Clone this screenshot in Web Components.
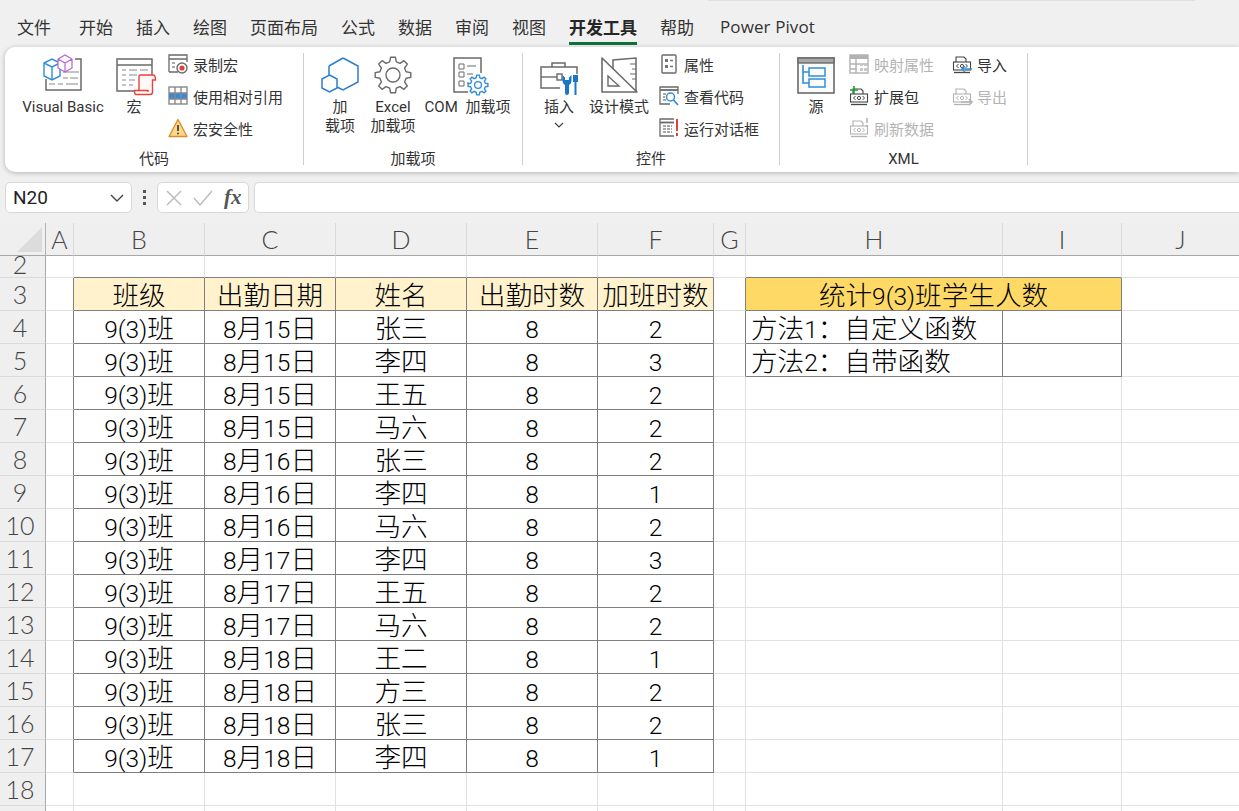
<!DOCTYPE html>
<html lang="zh">
<head>
<meta charset="utf-8">
<title>开发工具</title>
<style>
html, body { margin: 0; height: 100%; overflow: hidden; background: #f0f0f0; }
body { font-family: "Noto Sans CJK SC", sans-serif; color: #333; }
</style>
</head>
<body>
<excel-tabs></excel-tabs>
<excel-ribbon>
  <ribbon-group label="代码" style="width:299px;--pad:11px">
    <big-button icon="vb" style="width:94px">Visual Basic</big-button>
    <big-button icon="macro" style="width:48px">宏</big-button>
    <small-column style="margin-left:10px">
      <small-button icon="record">录制宏</small-button>
      <small-button icon="relative">使用相对引用</small-button>
      <small-button icon="warn">宏安全性</small-button>
    </small-column>
  </ribbon-group>
  <ribbon-group label="加载项" style="width:219px;--pad:14px">
    <big-button icon="addin" style="width:44px">加<br>载项</big-button>
    <big-button icon="gear" style="width:62px">Excel<br>加载项</big-button>
    <big-button icon="com" style="width:87px;word-spacing:4px">COM 加载项</big-button>
  </ribbon-group>
  <ribbon-group label="控件" style="width:257px;--pad:14px">
    <big-button icon="toolbox" chevron style="width:44px">插入</big-button>
    <big-button icon="ruler" style="width:76px">设计模式</big-button>
    <small-column style="margin-left:2px">
      <small-button icon="props">属性</small-button>
      <small-button icon="viewcode">查看代码</small-button>
      <small-button icon="dialog">运行对话框</small-button>
    </small-column>
  </ribbon-group>
  <ribbon-group label="XML" style="width:248px;--pad:16px">
    <big-button icon="source" style="width:40px">源</big-button>
    <small-column style="margin-left:13px;width:103px">
      <small-button icon="map" disabled>映射属性</small-button>
      <small-button icon="pack">扩展包</small-button>
      <small-button icon="refresh" disabled>刷新数据</small-button>
    </small-column>
    <small-column>
      <small-button icon="import">导入</small-button>
      <small-button icon="export" disabled>导出</small-button>
    </small-column>
  </ribbon-group>
</excel-ribbon>
<formula-bar></formula-bar>
<sheet-grid></sheet-grid>

<script>
// builds a cog outline, used by the two gear icons
const gearPath = (cx, cy, R, r, n) => {
    let d = '';
    for (let i = 0; i < n; i++) {
        const a = i * 2 * Math.PI / n, w = Math.PI / n;
        [[r, a - w * 0.62], [R, a - w * 0.34], [R, a + w * 0.34], [r, a + w * 0.62]].forEach(([q, t], k) => {
            d += (i === 0 && k === 0 ? 'M' : 'L') + (cx + q * Math.sin(t)).toFixed(1) + ' ' + (cy - q * Math.cos(t)).toFixed(1);
        });
    }
    return d + 'Z';
};

const G = '#6a6a6a', B = '#2f8ed8', L = '#b2b2b2';
const svg = (w, h, body) => `<svg width="${w}" height="${h}" viewBox="0 0 ${w} ${h}" fill="none" stroke-width="1.4" style="overflow:visible;display:block">${body}</svg>`;
const docIcon = (extra, c) => svg(20, 20, `<path d="M4 8V3H12L14 5V8" stroke="${c}" stroke-width="1.1"/><rect x="1.5" y="8" width="17" height="8" fill="#fff" stroke="${c}" stroke-width="1.1"/><path d="M2 18.5H18" stroke="${c}" stroke-width="1.3"/><path d="M6.5 10L4.5 12L6.5 14M13.5 10L15.5 12L13.5 14" stroke="${c}" stroke-width="1"/><circle cx="10" cy="12" r="1.6" stroke="${c}" stroke-width="1"/>${extra}`);

const ICONS = {
    vb: svg(40, 38, `<path d="M32 5H38V36H3V25" stroke="${G}" stroke-width="1.5"/>
        <path d="M20 18H36M20 24H25M27 24H35M6 30H12M15 30H20M23 30H35" stroke="#8a8a8a" stroke-width="1.2"/>
        <path d="M1 9L9 5L17 9V22L9 26L1 22ZM1 9L9 13L17 9M9 13V26" stroke="${B}" fill="#fff" stroke-width="1.4"/>
        <path d="M15 5L22 1L29 5V14L22 18L15 14ZM15 5L22 9L29 5M22 9V18" stroke="#bb62d2" fill="#fff" stroke-width="1.2"/>`),
    macro: svg(42, 42, `<path d="M22 37H4V5H39V21" stroke="${G}" stroke-width="1.5"/><path d="M4 11H39" stroke="${G}" stroke-width="1.3"/>
        <path d="M9 16H13M16 16H24M27 16H35M9 21H13M16 21H24M9 26H13M16 26H22M9 31H13M16 31H20" stroke="#8a8a8a" stroke-width="1.2"/>
        <path d="M26 36V22.5Q26 21 28 21H40Q42.5 21 42.5 26H39.5V38Q39.5 40.5 37 40.5H23Q21.5 40.5 21.5 36.5H35V38" fill="#fff8f7" stroke="#e8413c" stroke-width="1.4"/>`),
    record: svg(20, 20, `<path d="M1 18V1H19V8" stroke="${G}" stroke-width="1.3"/><path d="M1 18H10M1 5H19" stroke="${G}" stroke-width="1.3"/><path d="M4 9H7M4 13H7" stroke="#8a8a8a"/><circle cx="14" cy="14" r="5" fill="#fff" stroke="${G}"/><circle cx="14" cy="14" r="2.6" fill="#e0403a"/>`),
    relative: svg(20, 20, `<rect x="1" y="1" width="18" height="17" fill="#fff" stroke="#888"/><rect x="1" y="7" width="18" height="6" fill="#3c8ad6"/><path d="M7 1V18M13 1V18M1 7H19M1 13H19" stroke="#888"/>`),
    warn: svg(20, 20, `<path d="M10 1.5L19 18.5H1Z" fill="#fbd98b" stroke="#dd8a28" stroke-width="1.3" stroke-linejoin="round"/><path d="M10 7V13" stroke="#444" stroke-width="1.8"/><circle cx="10" cy="15.5" r="1" fill="#444"/>`),
    addin: svg(38, 38, `<path d="M22 4L37 12V28L22 36L16 33M8 21V12Z" stroke="#2b7fd0" stroke-width="1.5"/><path d="M8 12L22 4" stroke="#2b7fd0" stroke-width="1.5"/><path d="M8.5 21L16 25V34L8.5 38L1 34V25Z" fill="#fff" stroke="#2b7fd0" stroke-width="1.5"/>`),
    gear: svg(38, 38, `<path d="${gearPath(19, 21, 18, 13.5, 8)}" stroke="${G}" stroke-width="1.4" stroke-linejoin="round"/><circle cx="19" cy="21" r="7" stroke="${G}" stroke-width="1.4"/>`),
    com: svg(38, 40, `<path d="M32 19V4H5V38H19" stroke="${G}" stroke-width="1.5"/>
        <path d="M10 10h5v5h-5zM10 18h5v5h-5zM10 27h5v5h-5z" stroke="${G}" stroke-width="1"/><path d="M18 12H27M18 20H24M18 29H20" stroke="${G}" stroke-width="1.2"/>
        <path d="${gearPath(29, 31, 10, 7.5, 8)}" fill="#fff" stroke="${B}" stroke-width="1.4"/><circle cx="29" cy="31" r="3.4" stroke="${B}" stroke-width="1.3"/>`),
    toolbox: svg(38, 38, `<path d="M12 13V9H25V13" stroke="${G}" stroke-width="1.5"/><path d="M20 34H1V13H37V20" stroke="${G}" stroke-width="1.5"/><path d="M1 23H17" stroke="${G}" stroke-width="1.4"/><rect x="17" y="20" width="5" height="6" stroke="${G}"/>
        <path d="M22.5 21V26Q22.5 30 25 31V39Q25 41 27 41Q29 41 29 39V31Q31.5 30 31.5 26V21L29 23.5V26H25V23.5Z" fill="#1b76c8"/><path d="M33 21H38V28H36.5V41H34.5V28H33Z" fill="#1b76c8"/>`),
    ruler: svg(38, 38, `<path d="M2 4V38H37Z" stroke="${G}" stroke-width="1.6" stroke-linejoin="round"/><path d="M8 22V32H19Z" stroke="${G}" stroke-width="1.4"/><path d="M13 15V6L36 4V38" stroke="${G}" stroke-width="1.5"/><path d="M30 10H36M32 15H36M30 20H36M32 25H36" stroke="${G}" stroke-width="1.2"/>`),
    props: svg(20, 20, `<rect x="3" y="1" width="14" height="18" rx="1" fill="#fff" stroke="${G}"/><path d="M6 5h3v3h-3zM6 11h3v3h-3z" fill="#777"/><path d="M11 6.5H14M11 12.5H14" stroke="#777"/>`),
    viewcode: svg(20, 20, `<path d="M11 18H1V1H19V8" stroke="${G}" stroke-width="1.3"/><path d="M1 4H19" stroke="${G}" stroke-width="1.8"/><path d="M4 8H7M4 11H6M4 14H7" stroke="#8a8a8a"/><circle cx="11.5" cy="11" r="4" fill="#fff" stroke="${B}" stroke-width="1.5"/><path d="M14.5 14L19 19" stroke="${B}" stroke-width="1.8"/>`),
    dialog: svg(20, 20, `<path d="M15 18H1V1H15" stroke="${G}" stroke-width="1.3"/><path d="M1 4.5H15" stroke="${G}" stroke-width="1.8"/><path d="M4 8H13M4 11H13M4 14H13" stroke="#8a8a8a" stroke-dasharray="3 1"/><path d="M18 1V13" stroke="#e0403a" stroke-width="2"/><path d="M18 15V18" stroke="#e0403a" stroke-width="2"/>`),
    source: svg(38, 40, `<rect x="1" y="4" width="36" height="35" fill="#fbfbfb" stroke="${G}" stroke-width="1.6"/><rect x="1" y="4" width="36" height="5" fill="#a8a8a8" stroke="${G}"/><path d="M6 11V29H12M6 18H12" stroke="${B}" stroke-width="1.6"/><rect x="12" y="14" width="16" height="8" stroke="${B}" stroke-width="1.5"/><rect x="12" y="25" width="16" height="8" stroke="${B}" stroke-width="1.5"/>`),
    map: svg(20, 20, `<rect x="1" y="1" width="18" height="18" stroke="${L}"/><rect x="1" y="1" width="18" height="4" fill="${L}"/><path d="M1 10H19M7 5V19M1 15H8" stroke="${L}"/><path d="M11 9h3v3h-3zM15 9h3v3h-3zM11 14h3v3h-3zM15 14h3v3h-3z" fill="#c8c8c8"/>`),
    pack: docIcon(`<path d="M5 0V8M1 4H9" stroke="#1f9a3c" stroke-width="1.6"/>`, '#444'),
    refresh: docIcon(`<path d="M18 0V5M18 7V9" stroke="${L}" stroke-width="1.6"/>`, L),
    import: docIcon(`<path d="M20 15H10M13 12L10 15L13 18" stroke="${B}" stroke-width="1.5" fill="#fff"/>`, '#444'),
    export: docIcon(`<path d="M9 16H20M17 13L20 16L17 19" stroke="${L}" stroke-width="1.5"/>`, L)
};

class ExcelTabs extends HTMLElement {
    constructor() {
        super();
        const tabs = ['文件', '开始', '插入', '绘图', '页面布局', '公式', '数据', '审阅', '视图', '开发工具', '帮助'];
        this.attachShadow({ mode: 'open' }).innerHTML = `
            <style>
                :host { display: flex; position: relative; height: 47px; box-sizing: border-box; padding-left: 17px; gap: 23px; font-size: 17px; color: #333; }
                :host::before { content: ""; position: absolute; left: 708px; top: 0; width: 487px; height: 1px; background: #e0e0e0; }
                span { display: block; height: 42px; line-height: 20px; padding-top: 17px; box-sizing: border-box; white-space: nowrap; }
                style + span { margin-right: 5px; }
                .on { font-weight: 700; color: #262626; height: 45px; border-bottom: 3px solid #0f703b; }
                .pp { margin-left: 3px; font-family: "Open Sans", sans-serif; font-size: 17px; letter-spacing: .1px; }
            </style>
            ${tabs.map(t => `<span class="${t === '开发工具' ? 'on' : ''}">${t}</span>`).join('')}
            <span class="pp">Power Pivot</span>`;
    }
}

class ExcelRibbon extends HTMLElement {
    constructor() {
        super();
        this.attachShadow({ mode: 'open' }).innerHTML = `
            <style>
                :host { display: flex; height: 125px; margin-left: 5px; background: #fff; border-radius: 10px 0 0 10px; box-shadow: 0 1px 5px rgba(0,0,0,.25); font: 15px Roboto, "Noto Sans CJK SC", sans-serif; color: #333; }
            </style>
            <slot></slot>`;
    }
}

class RibbonGroup extends HTMLElement {
    constructor() {
        super();
        this.attachShadow({ mode: 'open' }).innerHTML = `
            <style>
                :host { display: flex; box-sizing: border-box; flex: none; }
                .body { flex: 1; display: flex; flex-direction: column; min-width: 0; }
                .items { flex: 1; display: flex; padding-left: var(--pad); }
                .label { text-align: center; line-height: 20px; padding-bottom: 3px; color: #333; }
                .sep { width: 1px; margin: 6px 0 7px; background: #cfcfcf; }
            </style>
            <div class="body"><div class="items"><slot></slot></div><div class="label"></div></div>
            <div class="sep"></div>`;
        this.shadowRoot.querySelector('.label').textContent = this.getAttribute('label');
    }
}

class BigButton extends HTMLElement {
    constructor() {
        super();
        this.attachShadow({ mode: 'open' }).innerHTML = `
            <style>
                :host { display: flex; flex-direction: column; align-items: center; flex: none; padding-top: 7px; text-align: center; line-height: 19px; white-space: nowrap; }
                .icon { height: 44px; }
                .chev { margin-top: 5px; }
            </style>
            <div class="icon">${ICONS[this.getAttribute('icon')]}</div>
            <div><slot></slot></div>
            ${this.hasAttribute('chevron') ? '<svg class="chev" width="10" height="6" viewBox="0 0 10 6" fill="none" stroke="#444" stroke-width="1.2"><path d="M1 1L5 5L9 1"/></svg>' : ''}`;
    }
}

class SmallColumn extends HTMLElement {
    constructor() {
        super();
        this.attachShadow({ mode: 'open' }).innerHTML = `
            <style>:host { display: flex; flex-direction: column; padding-top: 1px; flex: none; }</style>
            <slot></slot>`;
    }
}

class SmallButton extends HTMLElement {
    constructor() {
        super();
        this.attachShadow({ mode: 'open' }).innerHTML = `
            <style>
                :host { display: flex; align-items: center; gap: 5px; height: 32px; white-space: nowrap; }
                :host([disabled]) { color: #b4b4b4; }
            </style>
            ${ICONS[this.getAttribute('icon')]}<span><slot></slot></span>`;
    }
}

class FormulaBar extends HTMLElement {
    constructor() {
        super();
        this.attachShadow({ mode: 'open' }).innerHTML = `
            <style>
                :host { display: flex; align-items: center; height: 51px; box-sizing: border-box; padding: 10px 0 10px 5px; }
                .box { height: 31px; box-sizing: border-box; background: #fff; border: 1px solid #d8d8d8; border-radius: 5px; display: flex; align-items: center; }
                .name { width: 127px; padding: 0 7px 0 7px; justify-content: space-between; font: 19px Roboto, sans-serif; color: #222; }
                .dots { width: 25px; display: flex; flex-direction: column; align-items: center; gap: 3px; }
                .dots i { width: 3px; height: 3px; background: #555; }
                .fx { width: 92px; padding-left: 8px; gap: 11px; }
                .fx b { font: italic 700 21px "Liberation Serif", serif; color: #555; }
                .input { flex: 1; margin-left: 5px; border-radius: 5px 0 0 5px; border-right: 0; }
            </style>
            <div class="box name"><span>N20</span><svg width="14" height="8" viewBox="0 0 14 8" fill="none" stroke="#444" stroke-width="1.4"><path d="M1 1L7 7L13 1"/></svg></div>
            <div class="dots"><i></i><i></i><i></i></div>
            <div class="box fx">
                <svg width="16" height="16" viewBox="0 0 16 16" fill="none" stroke="#bdbdbd" stroke-width="1.5"><path d="M1 1L15 15M15 1L1 15"/></svg>
                <svg width="20" height="16" viewBox="0 0 20 16" fill="none" stroke="#bdbdbd" stroke-width="1.5"><path d="M1 8L7 15L19 1"/></svg>
                <b>fx</b>
            </div>
            <div class="box input"></div>`;
    }
}

const COLS = ['A', 'B', 'C', 'D', 'E', 'F', 'G', 'H', 'I', 'J'];
const ROSTER = [
    ['8月15日', '张三', 2], ['8月15日', '李四', 3], ['8月15日', '王五', 2], ['8月15日', '马六', 2],
    ['8月16日', '张三', 2], ['8月16日', '李四', 1], ['8月16日', '马六', 2],
    ['8月17日', '李四', 3], ['8月17日', '王五', 2], ['8月17日', '马六', 2],
    ['8月18日', '王二', 1], ['8月18日', '方三', 2], ['8月18日', '张三', 2], ['8月18日', '李四', 1]
];

class SheetGrid extends HTMLElement {
    constructor() {
        super();
        this.values = { 3: { B: '班级', C: '出勤日期', D: '姓名', E: '出勤时数', F: '加班时数', H: '统计9(3)班学生人数' },
            4: { H: '方法1：自定义函数' }, 5: { H: '方法2：自带函数' } };
        ROSTER.forEach(([date, name, extra], i) => {
            this.values[i + 4] = Object.assign(this.values[i + 4] || {}, { B: '9(3)班', C: date, D: name, E: 8, F: extra });
        });
        this.attachShadow({ mode: 'open' });
        this.render();
    }

    inTable(c, r) { // c is an index into COLS
        return (c >= 1 && c <= 5 && r >= 3 && r <= 17) || (c >= 7 && c <= 8 && r >= 3 && r <= 5);
    }

    // digits are set smaller than the han glyphs, the two fonts do not share a scale
    text(v) {
        return String(v).replace(/[0-9()]+/g, m => `<span class="n">${m}</span>`);
    }

    cell(c, r) {
        const col = COLS[c];
        if (r === 3 && col === 'I') return '';
        const v = (this.values[r] || {})[col];
        const span = r === 3 && col === 'H';
        const last = span ? 8 : c;
        const classes = ['c'];
        if (this.inTable(c, r) || this.inTable(last + 1, r)) classes.push('dr');
        if (this.inTable(c, r) || this.inTable(c, r + 1)) classes.push('db');
        if (r === 3 && c <= 5 && c >= 1) classes.push('head');
        if (span) classes.push('title');
        if (col === 'H' && r > 3) classes.push('left');
        return `<div class="${classes.join(' ')}"${span ? ' style="grid-column:span 2"' : ''}>${v === undefined ? '' : `<span>${this.text(v)}</span>`}</div>`;
    }

    render() {
        let cells = `<div class="corner"><svg width="26" height="26" viewBox="0 0 26 26"><path d="M25 0V25H0Z" fill="#dcdcdc"/></svg></div>`;
        cells += COLS.map(c => `<div class="ch">${c}</div>`).join('');
        for (let r = 2; r <= 19; r++) {
            cells += `<div class="rh${r === 2 ? ' clip' : ''}"><span>${r === 19 ? '' : r}</span></div>`;
            COLS.forEach((_, c) => { cells += this.cell(c, r); });
        }
        this.shadowRoot.innerHTML = `
            <style>
                :host { display: block; height: 588px; overflow: hidden; background: #fff; }
                .grid { display: grid; grid-template-columns: 46px 28px 131px 131px 131px 131px 116px 32px 257px 119px 118px; grid-template-rows: 33px 22px repeat(17, 33px); }
                .corner { background: #efefef; border-right: 1px solid #b4b4b4; border-bottom: 1px solid #a8a8a8; box-sizing: border-box; display: flex; align-items: flex-start; padding: 4px 0 0 17px; }
                .ch { background: #efefef; border-right: 1px solid #dadada; border-bottom: 1px solid #a8a8a8; text-align: center; font: 300 25px/33px Lato, sans-serif; color: #444; }
                .rh { background: #efefef; border-right: 1px solid #a8a8a8; border-bottom: 1px solid #dadada; text-align: center; padding-right: 5px; font: 300 25px/33px Lato, sans-serif; color: #444; overflow: hidden; }
                .rh.clip { line-height: 16px; }
                .c { box-sizing: border-box; padding-top: 5px; border-right: 1px solid #e1e1e1; border-bottom: 1px solid #e1e1e1; text-align: center; white-space: nowrap; font: 300 26.6px/27px "Liberation Sans", "Noto Sans CJK SC", sans-serif; color: #000; }
                .n { font: 300 24.5px/27px Roboto, sans-serif; }
                .c.dr { border-right-color: #7f7f7f; }
                .c.db { border-bottom-color: #7f7f7f; }
                .head { background: #fff2cc; }
                .title { background: #ffd966; }
                .left { text-align: left; padding-left: 5px; }
            </style>
            <div class="grid">${cells}</div>`;
    }
}

customElements.define('excel-tabs', ExcelTabs);
customElements.define('excel-ribbon', ExcelRibbon);
customElements.define('ribbon-group', RibbonGroup);
customElements.define('big-button', BigButton);
customElements.define('small-column', SmallColumn);
customElements.define('small-button', SmallButton);
customElements.define('formula-bar', FormulaBar);
customElements.define('sheet-grid', SheetGrid);
</script>
</body>
</html>
